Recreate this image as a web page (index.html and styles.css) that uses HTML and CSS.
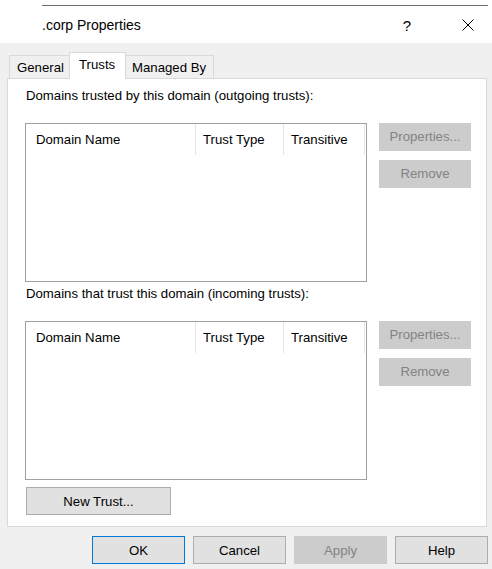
FILE: index.html
```html
<!DOCTYPE html>
<html>
<head>
<meta charset="utf-8">
<link rel="stylesheet" href="styles.css">
</head>
<body>
<div class="window">
  <header class="titlebar">
    <div class="topline"></div>
    <div class="titlerow">
      <span class="title">.corp Properties</span>
      <span class="help-btn">?</span>
      <span class="close-btn">
        <svg width="12" height="12" viewBox="0 0 12 12"><path d="M0.5 0.5 L11.5 11.5 M11.5 0.5 L0.5 11.5" stroke="#000" stroke-width="1" fill="none"/></svg>
      </span>
    </div>
  </header>
  <main class="client">
    <div class="tabstrip">
      <div class="tab tab-general">General</div>
      <div class="tab tab-trusts active">Trusts</div>
      <div class="tab tab-managed">Managed By</div>
    </div>
    <section class="panel">
      <div class="label">Domains trusted by this domain (outgoing trusts):</div>
      <div class="group">
        <div class="listview">
          <div class="lv-header">
            <div class="col col-name">Domain Name</div>
            <div class="col col-type">Trust Type</div>
            <div class="col col-trans">Transitive</div>
          </div>
        </div>
        <div class="side-buttons">
          <div class="btn disabled">Properties...</div>
          <div class="btn disabled">Remove</div>
        </div>
      </div>
      <div class="label label2">Domains that trust this domain (incoming trusts):</div>
      <div class="group">
        <div class="listview">
          <div class="lv-header">
            <div class="col col-name">Domain Name</div>
            <div class="col col-type">Trust Type</div>
            <div class="col col-trans">Transitive</div>
          </div>
        </div>
        <div class="side-buttons">
          <div class="btn disabled">Properties...</div>
          <div class="btn disabled">Remove</div>
        </div>
      </div>
      <div class="btn new-trust">New Trust...</div>
    </section>
    <footer class="footer">
      <div class="btn dlg default">OK</div>
      <div class="btn dlg">Cancel</div>
      <div class="btn dlg disabled">Apply</div>
      <div class="btn dlg">Help</div>
    </footer>
  </main>
</div>
</body>
</html>
```

FILE: styles.css
```css
html, body {
  margin: 0;
  padding: 0;
}
body {
  width: 492px;
  height: 569px;
  overflow: hidden;
  background: #f0f0f0;
  font-family: "Liberation Sans", Arial, sans-serif;
  font-size: 13.2px;
  color: #000;
}
.titlebar {
  height: 43px;
  background: #fff;
  display: flex;
  flex-direction: column;
}
.topline {
  margin: 5px 0 0 42px;
  width: 446px;
  height: 1px;
  background: #6e6e6e;
}
.titlerow {
  flex: 1;
  display: flex;
  align-items: center;
  padding-left: 42px;
}
.title {
  font-size: 14px;
  flex: 1;
  padding-top: 1px;
}
.help-btn {
  font-size: 15px;
  width: 14px;
  text-align: center;
  margin-right: 48px;
  padding-top: 1px;
}
.close-btn {
  width: 12px;
  height: 12px;
  margin-right: 18px;
  display: flex;
}
.client {
  display: flex;
  flex-direction: column;
}
.tabstrip {
  height: 26px;
  margin-top: 9px;
  padding-left: 9px;
  display: flex;
  align-items: flex-end;
  position: relative;
  z-index: 1;
}
.tab {
  box-sizing: border-box;
  height: 23px;
  border: 1px solid #d9d9d9;
  border-bottom: none;
  background: #f0f0f0;
  padding-left: 7px;
  line-height: 23px;
}
.tab-general { width: 60px; border-right: none; }
.tab-trusts {
  width: 57px;
  height: 27px;
  margin-bottom: -1px;
  background: #fff;
  padding-left: 9px;
  line-height: 24px;
}
.tab-managed { width: 88px; border-left: none; padding-left: 6px; }
.panel {
  box-sizing: border-box;
  margin-left: 7px;
  width: 480px;
  height: 449px;
  background: #fff;
  border: 1px solid #d9d9d9;
  display: flex;
  flex-direction: column;
  padding-left: 17px;
}
.label {
  line-height: 15px;
  margin-top: 9px;
  padding-left: 1px;
}
.label2 {
  margin-top: 4px;
}
.group {
  display: flex;
  gap: 12px;
  margin-top: 20px;
}
.listview {
  box-sizing: border-box;
  width: 342px;
  height: 159px;
  border: 1px solid #a0a0a0;
  background: #fff;
}
.lv-header {
  display: flex;
  height: 31px;
}
.col {
  box-sizing: border-box;
  border-right: 1px solid #e5e5e5;
  line-height: 31px;
  padding-top: 0;
}
.col-name { width: 170px; padding-left: 10px; }
.col-type { width: 88px; padding-left: 7px; }
.col-trans { width: 81px; padding-left: 7px; }
.side-buttons {
  display: flex;
  flex-direction: column;
  gap: 9px;
}
.btn {
  box-sizing: border-box;
  width: 92px;
  height: 28px;
  display: flex;
  align-items: center;
  justify-content: center;
  background: #e1e1e1;
  border: 1px solid #adadad;
  color: #000;
}
.btn.disabled {
  background: #cccccc;
  border-color: #cccccc;
  color: #838383;
}
.side-buttons .btn {
  padding-bottom: 2px;
}
.new-trust {
  width: 145px;
  margin-top: 7px;
  margin-left: 1px;
}
.footer {
  display: flex;
  justify-content: flex-end;
  gap: 8px;
  padding-right: 4px;
  margin-top: 9px;
}
.btn.dlg {
  width: 93px;
  height: 28px;
}
.btn.default {
  border-color: #0078d7;
}
```
